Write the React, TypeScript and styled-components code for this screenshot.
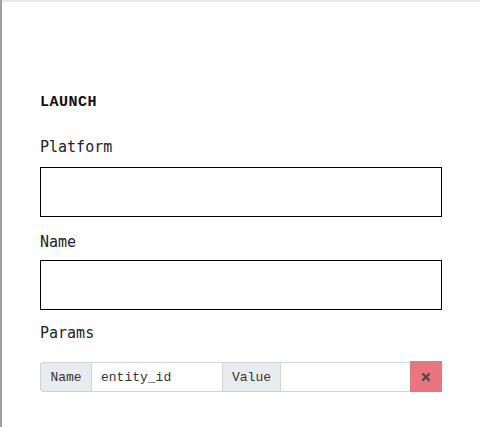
import React from "react";
import styled, { createGlobalStyle } from "styled-components";
import { FaTimes } from "react-icons/fa";

const GlobalStyle = createGlobalStyle`
  html, body {
    margin: 0;
    padding: 0;
    background: #ffffff;
  }
  * {
    box-sizing: border-box;
  }
`;

const Screen = styled.div`
  display: flex;
  width: 480px;
  height: 427px;
  overflow: hidden;
  background: #9da1a6;
`;

const Panel = styled.div`
  flex: 1;
  margin-left: 2px;
  border-top: 2px solid #e6e9ec;
  background: #ffffff;
  padding: 91px 39px 0 38px;
  font-family: "DejaVu Sans Mono", "Liberation Mono", monospace;
  color: #1a1a1a;
`;

const Title = styled.h2`
  margin: 0;
  font-family: "Liberation Mono", monospace;
  font-size: 15px;
  line-height: 20px;
  font-weight: 700;
  letter-spacing: 0.5px;
  color: #111;
`;

const Label = styled.label<{ $top: number; $bottom: number }>`
  display: block;
  margin-top: ${({ $top }) => $top}px;
  margin-bottom: ${({ $bottom }) => $bottom}px;
  font-size: 15px;
  line-height: 20px;
  color: #222;
`;

const TextBox = styled.input`
  display: block;
  width: 100%;
  height: 50px;
  margin: 0;
  border: 1px solid #000;
  border-radius: 0;
  background: #fff;
  font-family: inherit;
  font-size: 15px;
  padding: 0 10px;
  outline: none;
`;

const ParamRow = styled.div`
  display: flex;
  align-items: stretch;
  height: 30px;
`;

const Addon = styled.span<{ $width: number; $first?: boolean }>`
  display: flex;
  align-items: center;
  justify-content: center;
  width: ${({ $width }) => $width}px;
  background: #e9ecef;
  border: 1px solid #ced4da;
  border-radius: ${({ $first }) => ($first ? "3px 0 0 3px" : "0")};
  font-family: "Liberation Mono", monospace;
  font-size: 13px;
  color: #333;
`;

const ParamInput = styled.input<{ $width: number }>`
  width: ${({ $width }) => $width}px;
  margin: 0;
  border: 1px solid #ced4da;
  border-left: none;
  border-right: none;
  background: #fff;
  font-family: "Liberation Mono", monospace;
  font-size: 13px;
  color: #333;
  padding: 0 9px;
  outline: none;
`;

const RemoveButton = styled.button`
  display: flex;
  align-items: center;
  justify-content: center;
  width: 32px;
  height: 31px;
  margin: -1px 0 0 0;
  padding: 0;
  border: none;
  background: #e8757f;
  color: #4b4b4b;
  cursor: pointer;
`;

export default function App() {
  return (
    <>
      <GlobalStyle />
      <Screen>
        <Panel>
          <Title>LAUNCH</Title>
          <Label $top={24} $bottom={10}>Platform</Label>
          <TextBox />
          <Label $top={15} $bottom={8}>Name</Label>
          <TextBox />
          <Label $top={13} $bottom={19}>Params</Label>
          <ParamRow>
            <Addon $width={52} $first>Name</Addon>
            <ParamInput $width={130} defaultValue="entity_id" />
            <Addon $width={59}>Value</Addon>
            <ParamInput $width={129} />
            <RemoveButton aria-label="Remove param">
              <FaTimes size={12} />
            </RemoveButton>
          </ParamRow>
        </Panel>
      </Screen>
    </>
  );
}
